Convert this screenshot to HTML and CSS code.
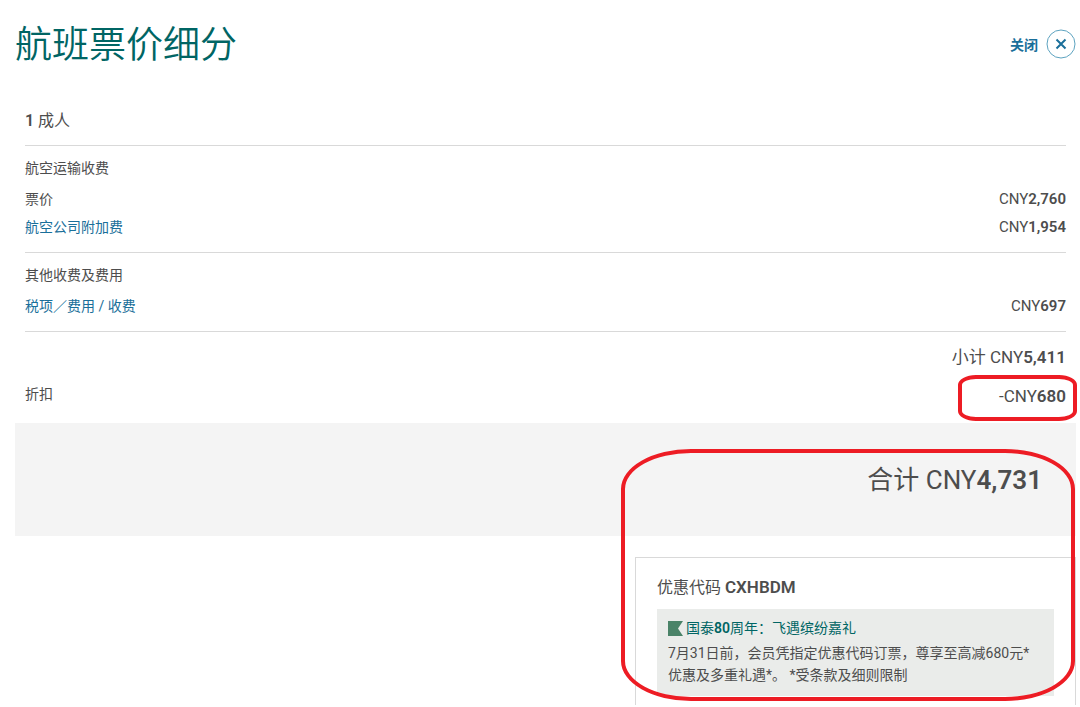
FILE: index.html
```html
<!DOCTYPE html>
<html lang="zh-CN">
<head>
    <meta charset="UTF-8">
    <meta name="viewport" content="width=device-width, initial-scale=1">
    <title>航班票价细分</title>
    <link rel="stylesheet" href="styles.css">
</head>
<body>

<div class="page">
    <header class="header">
        <h1>航班票价细分</h1>
        <button type="button" class="close">
            关闭
            <svg class="close-icon" width="30" height="30" viewBox="0 0 30 30" aria-hidden="true">
                <circle cx="15" cy="15" r="14"/>
                <path d="M10.5 10.5l9 9M19.5 10.5l-9 9"/>
            </svg>
        </button>
    </header>

    <main>
        <div class="fares">
            <h2 class="passenger"><b>1</b> 成人</h2>

            <section class="group">
                <h3>航空运输收费</h3>
                <table>
                    <tr><th scope="row">票价</th><td>CNY<b>2,760</b></td></tr>
                    <tr><th scope="row"><a href="#">航空公司附加费</a></th><td>CNY<b>1,954</b></td></tr>
                </table>
            </section>

            <section class="group">
                <h3>其他收费及费用</h3>
                <table>
                    <tr><th scope="row"><a href="#">税项／费用 / 收费</a></th><td>CNY<b>697</b></td></tr>
                </table>
            </section>

            <div class="summary">
                <p class="subtotal">小计 CNY<b>5,411</b></p>
                <div class="discount">
                    <span>折扣</span>
                    <span class="discount-value">-CNY<b>680</b></span>
                </div>
            </div>
        </div>

        <div class="final">
            <p class="total">合计 CNY<b>4,731</b></p>
            <section class="promo">
                <h2>优惠代码 <b>CXHBDM</b></h2>
                <div class="offer">
                    <h3>
                        <svg class="flag" width="15" height="15" viewBox="0 0 15 15" aria-hidden="true">
                            <path d="M0 0h15l-5 7.5 5 7.5H0z"/>
                        </svg>
                        <span>国泰<b>80</b>周年：飞遇缤纷嘉礼</span>
                    </h3>
                    <p>7月31日前，会员凭指定优惠代码订票，尊享至高减680元*<br>优惠及多重礼遇*。 *受条款及细则限制</p>
                </div>
            </section>
        </div>
    </main>
</div>

</body>
</html>
```
FILE: styles.css
```css
*, *::after { margin: 0; padding: 0; box-sizing: border-box; }
body { background: #fff; color: #4d4d4d; font-family: Roboto, "Noto Sans CJK SC", sans-serif; font-size: 14px; line-height: 22px; }
h1, h2, h3, th { font-weight: normal; }
b { font-weight: 600; }
a { color: #1a6f9a; text-decoration: none; }

.page { padding: 0 4px 3px 15px; }

/* header */
.header { display: flex; justify-content: space-between; align-items: center; height: 88px; }
.header h1 { padding-top: 4px; font-size: 37px; font-weight: 350; line-height: 48px; color: #006564; }
.close { display: flex; align-items: center; gap: 8px; border: 0; background: none; color: #1a6f9a; font-family: inherit; font-size: 14px; font-weight: bold; cursor: pointer; }
.close-icon { fill: none; stroke: #1a6f9a; stroke-width: 2; }
.close-icon circle { stroke: #5da3c0; stroke-width: 1; }

/* fare lines */
.fares { padding: 21px 10px 0; }
.passenger { padding-bottom: 12px; font-size: 16px; line-height: 24px; }
.group { padding: 11px 0; border-top: 1px solid #d9d9d9; }
.group h3 { margin-bottom: 6px; font-size: 14px; }
.group table { width: 100%; border-collapse: collapse; }
.group th { text-align: left; line-height: 28px; }
.group td { text-align: right; font-size: 15px; line-height: 28px; }

.summary { padding: 13px 0 14px; border-top: 1px solid #d9d9d9; }
.subtotal { font-size: 17px; line-height: 24px; text-align: right; }
.discount { display: flex; justify-content: space-between; margin-top: 14px; }
.discount-value { position: relative; font-size: 17px; line-height: 26px; }

/* total and promo code */
.final { position: relative; }
.total { padding: 39px 34px 38px; background: #f4f4f4; font-size: 26px; line-height: 36px; text-align: right; }
.promo { width: 441px; max-width: 100%; margin: 21px 0 0 auto; padding: 17px 21px 9px; border: 1px solid #d9d9d9; border-bottom: 0; }
.promo h2 { margin-bottom: 9px; font-size: 16px; line-height: 24px; }
.promo h2 b { font-size: 17px; }
.offer { padding: 8px 11px 10px; background: #eaecea; }
.offer h3 { display: flex; align-items: center; gap: 3px; margin-bottom: 3px; font-size: 14px; color: #006564; }
.flag { fill: #4a8368; }

/* red marker rings */
.discount-value::after, .final::after { content: ""; position: absolute; border: 4px solid #ed1c24; pointer-events: none; }
.discount-value::after { top: -8px; right: -11px; bottom: -12px; left: -41px; border-radius: 18px / 10px; }
.final::after { top: 26px; right: 1px; bottom: 4px; width: 454px; border-radius: 70px / 40px; }
```
